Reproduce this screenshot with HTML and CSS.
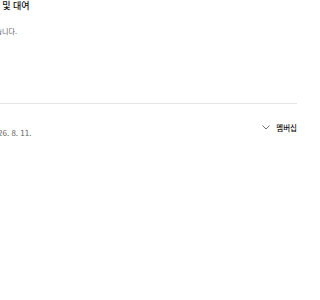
FILE: index.html
```html
<!DOCTYPE html>
<html lang="ko">
<head>
<meta charset="utf-8">
<link rel="stylesheet" href="styles.css">
</head>
<body>
<main class="page">
  <section class="header">
    <h1 class="title">멤버십, 구매 및 대여</h1>
    <p class="subtitle">구매 내역이 없습니다.</p>
  </section>
  <section class="row">
    <div class="info">
      <div class="name">밀리 프리미엄</div>
      <div class="date">다음 결제: 2026. 8. 11.</div>
    </div>
    <button class="toggle">
      <svg class="chev" viewBox="0 0 8 5" width="8" height="5"><path d="M0.5 0.5 L4 4 L7.5 0.5" fill="none" stroke="#606060" stroke-width="0.9"/></svg>
      <span>멤버십</span>
    </button>
  </section>
</main>
</body>
</html>
```
FILE: styles.css
```css
html, body {
  margin: 0;
  padding: 0;
  background: #ffffff;
  overflow: hidden;
}
body {
  width: 300px;
  font-family: "Noto Sans CJK KR", "Noto Sans", Roboto, sans-serif;
  color: #0f0f0f;
}
.page {
  margin-left: -47px;
  width: 344px;
}
.header {
  height: 103px;
  border-bottom: 1px solid #e5e5e5;
}
.title {
  margin: 0;
  font-size: 9px;
  line-height: 12px;
  font-weight: 500;
  white-space: nowrap;
}
.subtitle {
  margin: 13px 0 0;
  font-size: 7px;
  line-height: 12px;
  color: #606060;
  white-space: nowrap;
}
.row {
  display: flex;
  align-items: center;
  justify-content: space-between;
  padding-top: 11px;
}
.name {
  font-size: 8px;
  line-height: 12px;
  font-weight: 700;
  white-space: nowrap;
}
.date {
  font-size: 8px;
  line-height: 12px;
  color: #606060;
  white-space: nowrap;
}
.toggle {
  display: flex;
  align-items: center;
  gap: 6px;
  border: none;
  background: none;
  padding: 0;
  font-family: inherit;
  font-size: 7.5px;
  font-weight: 500;
  color: #0f0f0f;
}
.chev {
  display: block;
}
```
